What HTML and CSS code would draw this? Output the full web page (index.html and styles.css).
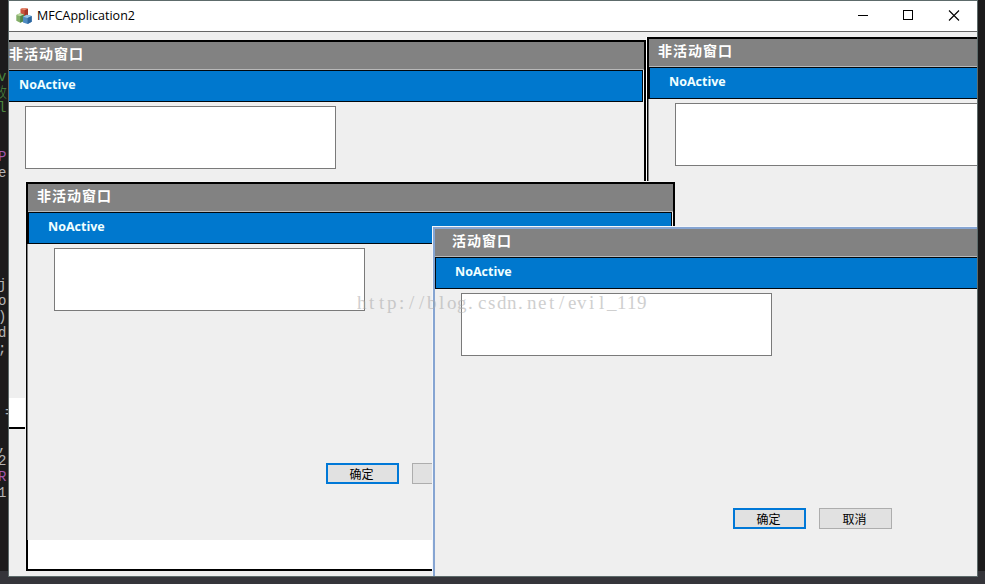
FILE: index.html
```html
<!DOCTYPE html>
<html lang="zh-CN">
<head>
<meta charset="utf-8">
<title>MFCApplication2</title>
<link rel="stylesheet" href="styles.css">
</head>
<body>
<div class="desktop">
  <span class="code green" style="top:69px">v</span>
  <span class="code green cjk" style="top:85px">效</span>
  <span class="code green" style="top:100px">l</span>
  <span class="code purple" style="top:149px">P</span>
  <span class="code" style="top:165px">e</span>
  <span class="code" style="top:277px">j</span>
  <span class="code" style="top:293px">o</span>
  <span class="code" style="top:309px">)</span>
  <span class="code" style="top:325px">d</span>
  <span class="code" style="top:341px">;</span>
  <span class="code edge" style="top:405px">=</span>
  <span class="code" style="top:438px">,</span>
  <span class="code" style="top:453px">2</span>
  <span class="code purple" style="top:469px">R</span>
  <span class="code" style="top:485px">1</span>
  <main class="app">
    <header class="titlebar">
      <svg class="logo" viewBox="0 0 16 16" width="16" height="16">
        <path d="M4.500 1 7.500-.2 12 .7v6.500L8.500 8.600 4.500 7.500z" fill="#c9553f"/>
        <path d="M4.500 1 7.500-.2 12 .7 8.600 2.300z" fill="#e58a70"/>
        <path d="M8.600 2.300 12 .7v6.500L8.500 8.600z" fill="#a43628"/>
        <path d="M.3 7 4 5.200l4 1.200v6.500l-3.800 1.800L.3 12.800z" fill="#83ae68"/>
        <path d="M.3 7 4 5.200l4 1.200-3.800 1.800z" fill="#bfd8a2"/>
        <path d="M4.200 8.200 8 6.400v6.500l-3.800 1.800z" fill="#4f8548"/>
        <path d="M7 8.700 10.800 6.800 15.700 8v5.700l-4.100 2.200L7 14.400z" fill="#4f8bc0"/>
        <path d="M7 8.700 10.800 6.800 15.700 8l-4.100 1.900z" fill="#9ac9e8"/>
        <path d="M11.600 9.900 15.700 8v5.700l-4.100 2.200z" fill="#2c659f"/>
      </svg>
      <h1>MFCApplication2</h1>
      <svg class="controls" viewBox="0 0 114 30" width="114" height="30" fill="none" stroke="#000">
        <path d="M0 14.500h10"/><rect x="45.500" y="9.500" width="9" height="9"/><path stroke-width="1.100" d="m91 9.500 10 10m0-10-10 10"/>
      </svg>
    </header>
    <section class="client">
      <article class="dialog first">
        <h2>非活动窗口</h2><div class="banner">NoActive</div>
        <div class="body"><div class="box"></div></div>
        <div class="foot"></div>
      </article>
      <article class="dialog second">
        <h2>非活动窗口</h2><div class="banner">NoActive</div>
        <div class="body"><div class="box"></div></div>
        <div class="foot"></div>
      </article>
      <article class="dialog third">
        <h2>非活动窗口</h2><div class="banner">NoActive</div>
        <div class="body"><div class="box"></div><div class="buttons"><button class="ok">确定</button><button></button></div></div>
        <div class="foot"></div>
      </article>
      <article class="dialog active">
        <h2>活动窗口</h2><div class="banner">NoActive</div>
        <div class="body"><div class="box"></div><div class="buttons"><button class="ok">确定</button><button>取消</button></div></div>
        <div class="foot"></div>
      </article>
    </section>
  </main>
  <div class="watermark"><svg width="300" height="24"><text y="17" x="0 12 22 30 42 52 62 70 82 90 100 111 121 131 140 150 161 170 181 192 202 211 220 232 242 250 260 270 280">http://blog.csdn.net/evil_119</text></svg></div>
</div>
</body>
</html>
```
FILE: styles.css
```css
* { box-sizing: border-box; }
body { margin: 0; }
.desktop {
  position: relative;
  width: 985px;
  height: 584px;
  overflow: hidden;
  padding-left: 8px;
  background: linear-gradient(#1c1b1c 571px, #35353a 571px);
  font-family: "Liberation Sans", "Noto Sans CJK SC", sans-serif;
}
.code {
  position: absolute;
  left: -2px;
  color: #b4b4b4;
  font: 14px/16px "Liberation Mono", "Noto Sans CJK SC", monospace;
}
.code.cjk { left: -7px; font-weight: 300; }
.code.edge { left: 5px; }
.code.green { color: #4b873f; }
.code.purple { color: #a458ab; }
.app {
  position: relative;
  width: 970px;
  height: 577px;
  border: 1px solid #5d6b6b;
  background: #efefef;
}
.titlebar {
  display: flex;
  align-items: center;
  height: 31px;
  padding-left: 7px;
  background: #fff;
  border-bottom: 1px solid #666;
}
.logo { margin-right: 5px; }
h1 { margin: 0; font: 12.5px/30px "Open Sans", sans-serif; color: #000; }
.controls { margin-left: auto; margin-right: 5px; }
.client { position: relative; height: 544px; overflow: hidden; }
.dialog {
  position: absolute;
  display: flex;
  flex-direction: column;
  width: 649px;
  height: 389px;
  border: 2px solid #000;
  background: #efefef;
}
.first { left: -12px; top: 8px; }
.second { left: 638px; top: 5px; box-shadow: -1px 0 #fff; }
.third { left: 17px; top: 150px; box-shadow: -1px -1px #f3f3f3; }
.active { left: 424px; top: 195px; border-color: #86a5d2; box-shadow: 0 0 0 1px #f3f6fa; }
h2 {
  margin: 0;
  height: 28px;
  padding-left: 9px;
  background: #828282;
  border-bottom: 1px solid #b8b8b8;
  color: #fff;
  font: bold 14px/23px "Noto Sans CJK SC", sans-serif;
  letter-spacing: 1px;
}
.first h2 { padding-left: 10px; }
.active h2 { padding-left: 17px; }
.banner {
  height: 32px;
  margin-right: 1px;
  padding-left: 19px;
  border: 1px solid #00070d;
  background: #0078ce;
  color: #f0ffff;
  font: bold 12.5px/28px "Open Sans", sans-serif;
}
.body { flex: 1; padding: 4px 0 0 26px; }
.third .body, .second .body { margin-left: -1px; border-left: 1px solid #808080; }
.box { width: 311px; height: 63px; background: #fff; border: 1px solid #7a7a7a; }
.buttons { display: flex; gap: 13px; margin: 152px 0 0 272px; }
button {
  width: 73px;
  height: 21px;
  padding: 0 2px 0 0;
  border: 1px solid #adadad;
  background: #e1e1e1;
  color: #000;
  font: 12px/17px "Noto Sans CJK SC", sans-serif;
}
.ok { border: 2px solid #0078d7; }
.foot { height: 29px; background: #fff; }
.watermark { position: absolute; left: 357px; top: 292px; height: 24px; opacity: .55; }
.watermark text { font: 19px "Liberation Serif", serif; fill: #a9a9a9; }
```
